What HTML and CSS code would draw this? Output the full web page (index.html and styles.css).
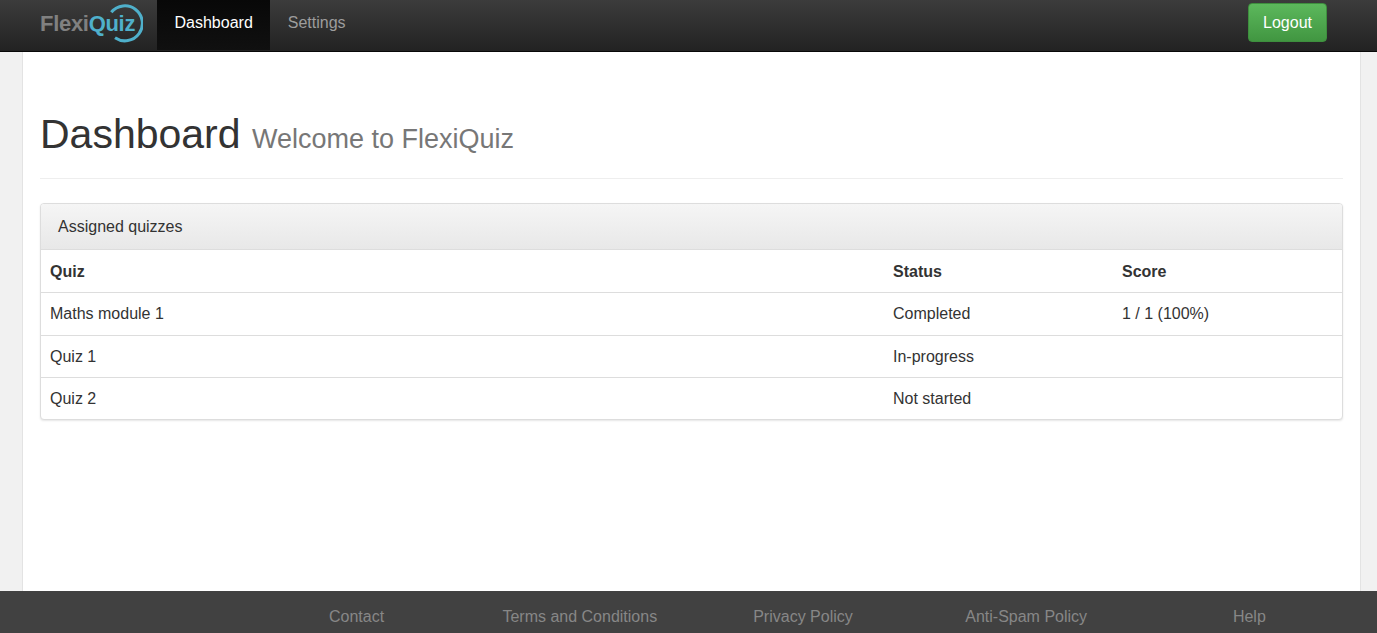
FILE: index.html
```html
<!DOCTYPE html>
<html lang="en">
<head>
<meta charset="utf-8">
<title>FlexiQuiz Dashboard</title>
<link rel="stylesheet" href="styles.css">
</head>
<body>
<nav class="navbar">
  <a class="brand" href="#">
    <svg class="brand-ring" width="52" height="46" viewBox="0 0 52 46" aria-hidden="true">
      <path d="M20.3 11.3 A17.5 17.5 0 1 1 24 36.8" fill="none" stroke="#4fb0cb" stroke-width="3"/>
    </svg>
    <span class="brand-flexi">Flexi</span><span class="brand-quiz">Quiz</span>
  </a>
  <ul class="nav-links">
    <li class="nav-item active"><a href="#">Dashboard</a></li>
    <li class="nav-item"><a href="#">Settings</a></li>
  </ul>
  <a class="btn-logout" href="#">Logout</a>
</nav>
<main class="page">
  <header class="page-header">
    <h1>Dashboard <small>Welcome to FlexiQuiz</small></h1>
  </header>
  <section class="panel">
    <div class="panel-heading">Assigned quizzes</div>
    <table class="quiz-table">
      <colgroup><col class="col-quiz"><col class="col-status"><col class="col-score"></colgroup>
      <thead>
        <tr><th>Quiz</th><th>Status</th><th>Score</th></tr>
      </thead>
      <tbody>
        <tr><td>Maths module 1</td><td>Completed</td><td>1 / 1 (100%)</td></tr>
        <tr><td>Quiz 1</td><td>In-progress</td><td></td></tr>
        <tr><td>Quiz 2</td><td>Not started</td><td></td></tr>
      </tbody>
    </table>
  </section>
</main>
<footer class="footer">
  <a href="#">Contact</a>
  <a href="#">Terms and Conditions</a>
  <a href="#">Privacy Policy</a>
  <a href="#">Anti-Spam Policy</a>
  <a href="#">Help</a>
</footer>
</body>
</html>
```
FILE: styles.css
```css
* { box-sizing: border-box; }
html, body { height: 100%; }
body {
  margin: 0;
  background: #f1f1f1;
  color: #333;
  font-family: "Liberation Sans", Arial, sans-serif;
  font-size: 16px;
  line-height: 1.42857;
  overflow: hidden;
}
a { text-decoration: none; }

.navbar {
  display: flex;
  align-items: stretch;
  height: 52px;
  padding-left: 40px;
  background: linear-gradient(to bottom, #3c3c3c, #222);
  border-bottom: 1px solid #080808;
}
.brand {
  position: relative;
  display: flex;
  align-items: center;
  width: 117px;
  height: 47px;
  font-size: 22px;
  font-weight: bold;
  letter-spacing: -0.3px;
}
.brand-ring { position: absolute; left: 51px; top: 1px; width: 52px; height: 46px; }
.brand-flexi { color: #808080; }
.brand-quiz { color: #4fb0cb; }

.nav-links {
  display: flex;
  margin: 0;
  padding: 0;
  list-style: none;
}
.nav-item a {
  display: block;
  padding: 0 17.5px;
  line-height: 45px;
  height: 50px;
  color: #9d9d9d;
}
.nav-item.active a {
  color: #fff;
  background: linear-gradient(to bottom, #080808, #101010);
}
.btn-logout {
  align-self: flex-start;
  margin: 3px 50px 0 auto;
  width: 79px;
  height: 39px;
  line-height: 37px;
  text-align: center;
  color: #fff;
  background: linear-gradient(to bottom, #5cb85c, #419641);
  border: 1px solid #3e8f3e;
  border-radius: 4px;
}

.page {
  height: 539px;
  margin: 0 16px 0 22px;
  padding: 0 17px;
  background: #fff;
  border-left: 1px solid #e3e3e3;
  border-right: 1px solid #e3e3e3;
}
.page-header {
  height: 127px;
  padding-top: 58px;
  border-bottom: 1px solid #eee;
}
h1 {
  margin: 0;
  font-size: 41px;
  font-weight: 400;
  line-height: 48px;
  color: #333;
}
h1 small {
  font-size: 27px;
  font-weight: 400;
  color: #777;
}

.panel {
  margin-top: 24px;
  background: #fff;
  border: 1px solid #ddd;
  border-radius: 4px;
  box-shadow: 0 1px 2px rgba(0, 0, 0, 0.1);
  overflow: hidden;
}
.panel-heading {
  height: 46px;
  padding: 0 17px;
  line-height: 46px;
  background: linear-gradient(to bottom, #f5f5f5, #e8e8e8);
  border-bottom: 1px solid #ddd;
}
.quiz-table {
  width: 100%;
  border-collapse: collapse;
  table-layout: fixed;
}
.col-quiz { width: 843px; }
.col-status { width: 229px; }
.quiz-table th, .quiz-table td {
  height: 42px;
  padding: 0 9px;
  text-align: left;
  vertical-align: middle;
  line-height: 21px;
}
.quiz-table th { padding-top: 2px; border-bottom: 1px solid #ddd; font-weight: bold; }
.quiz-table tbody tr:first-child td { height: 43px; }
.quiz-table tbody tr + tr td { border-top: 1px solid #ddd; }

.footer {
  position: fixed;
  left: 0;
  right: 0;
  bottom: 0;
  display: grid;
  grid-template-columns: repeat(5, 223.2px);
  height: 42px;
  padding-left: 245px;
  background: #414141;
  text-align: center;
  line-height: 52px;
}
.footer a { color: #878787; }
```
